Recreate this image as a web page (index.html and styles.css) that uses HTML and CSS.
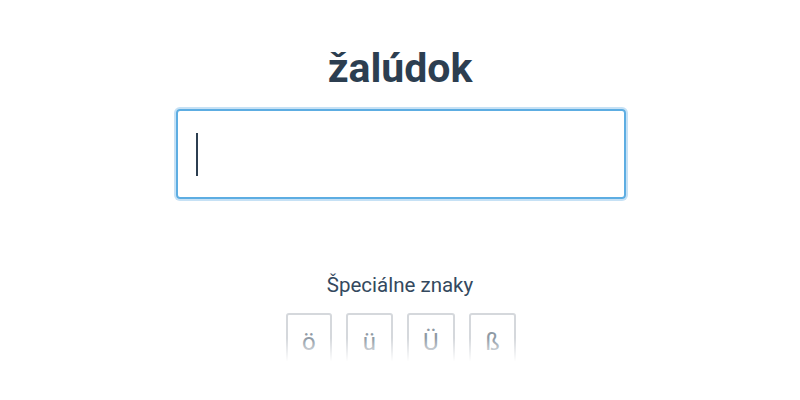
FILE: index.html
```html
<!DOCTYPE html>
<html lang="sk">
<head>
<meta charset="utf-8">
<link rel="stylesheet" href="styles.css">
</head>
<body>
<main class="page">
  <h1 class="word">žalúdok</h1>
  <div class="answer">
    <span class="caret"></span>
  </div>
  <section class="special">
    <p class="special-title">Špeciálne znaky</p>
    <div class="keys">
      <button class="key">ö</button>
      <button class="key">ü</button>
      <button class="key">Ü</button>
      <button class="key">ß</button>
    </div>
  </section>
  <div class="fade"></div>
</main>
</body>
</html>
```
FILE: styles.css
```css
html, body {
  margin: 0;
  padding: 0;
  background: #ffffff;
}
.page {
  position: relative;
  width: 800px;
  height: 400px;
  overflow: hidden;
  display: flex;
  flex-direction: column;
  align-items: center;
  font-family: Roboto, "Noto Sans", sans-serif;
}
.word {
  margin: 40px 0 0;
  font-size: 41px;
  line-height: 56px;
  font-weight: 700;
  color: #2c3e50;
}
.answer {
  margin-top: 13px;
  width: 428px;
  height: 86px;
  border: 2px solid #5dade2;
  border-radius: 4px;
  box-shadow: 0 0 0 2px #c6e1f5;
  display: flex;
  align-items: center;
  padding-left: 18px;
  box-sizing: content-box;
  transform: translateX(1px);
}
.caret {
  width: 2px;
  height: 43px;
  background: #2c3e50;
}
.special {
  margin-top: 74px;
  display: flex;
  flex-direction: column;
  align-items: center;
}
.special-title {
  margin: 0;
  font-size: 20.5px;
  line-height: 24px;
  color: #34495e;
}
.keys {
  margin-top: 16px;
  margin-left: 2px;
  display: flex;
  gap: 14px;
}
.key {
  height: 58px;
  border: 2px solid #d5d8dc;
  border-radius: 3px;
  background: #fff;
  font-family: Roboto, "Noto Sans", sans-serif;
  font-size: 24px;
  color: #8f9aa5;
  padding: 0 14.5px;
  display: flex;
  justify-content: center;
  align-items: center;
}
.fade {
  position: absolute;
  left: 0;
  right: 0;
  top: 338px;
  height: 62px;
  background: linear-gradient(to bottom, rgba(255,255,255,0) 0%, #ffffff 38%, #ffffff 100%);
}
```
